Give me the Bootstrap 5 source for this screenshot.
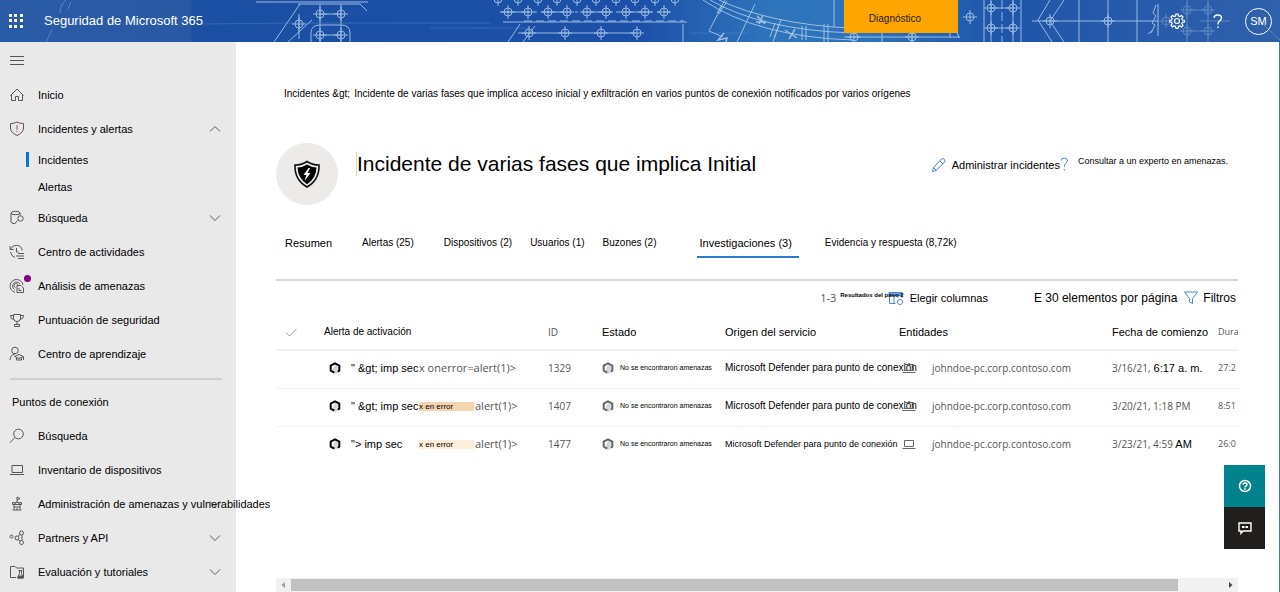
<!DOCTYPE html>
<html lang="es">
<head>
<meta charset="utf-8">
<meta name="viewport" content="width=device-width, initial-scale=1">
<title>Seguridad de Microsoft 365</title>
<link rel="stylesheet" href="https://cdn.jsdelivr.net/npm/bootstrap@5.3.0/dist/css/bootstrap.min.css">
<style>
  body { font-family: "Liberation Sans", sans-serif; font-size: 11px; line-height: 16px; color: #000; background: #fff; }
  a { color: inherit; text-decoration: none; }
  svg { flex: none; display: block; fill: none; stroke: currentColor; }
  .segoe { font-family: "Open Sans", sans-serif; color: #555; }
  .fs-7 { font-size: 7px; }
  .fs-9 { font-size: 9px; }
  .fs-10 { font-size: 10px; }
  .fs-11 { font-size: 11px; }
  .fs-12 { font-size: 12px; }
  .plain-btn { border: 0; background: none; padding: 0; color: #000; white-space: nowrap; }

  .topbar { height: 42px; background: #1d4fa6; color: #fff; overflow: hidden; }
  .topbar .blueprint { position: absolute; inset: 0; width: 100%; height: 100%; }
  .suite-name { font-size: 13px; }
  .launcher { width: 44px; padding-left: 9px; }
  .diagnostic { width: 114px; height: 33px; background: #ffa500; color: #222; border: 0; font-size: 10px; right: 322px; top: 0; padding: 4px 12px 0 0; }
  .persona { width: 27px; height: 27px; border: 1px solid #fff; font-size: 11px; margin: 0 8px 0 7px; }
  .tool { width: 41px; height: 42px; color: #fff; }

  .sidebar { width: 236px; background: #e9e9e9; flex: none; }
  .menu-btn { height: 36px; padding-left: 10px; }
  .side-link { height: 34px; padding: 0 14px 0 9px; white-space: nowrap; }
  .side-link .label { width: 171px; margin-left: 13px; }
  .side-link svg { color: #5c5558; }
  .sub-list { padding-bottom: 1px; }
  .sub-link { height: 27px; padding-left: 26px; }
  .sub-link::before { content: ""; width: 3px; height: 15px; margin-right: 9px; }
  .sub-link.active::before { background: #0078d4; }
  .side-rule { height: 2px; background: #cfcfcf; margin: 7px 14px 5px 10px; }
  .new-dot { width: 7px; height: 7px; background: #800080; left: 15px; top: -3px; }

  .page { padding: 44px 41px 0 40px; border-right: 1px solid #3f7cb5; min-width: 0; }
  .crumbs { padding-left: 8px; }
  .heading { margin-top: 41px; }
  .entity { width: 62px; height: 62px; background: #edebe9; }
  .page-title { font-size: 21px; line-height: 24px; border-left: 1px solid #f3d6a8; margin: 9px 0 0 18px; }
  .actions { margin: 10px 10px 0 0; }
  .manage { gap: 6px; }
  .consult { gap: 9px; }

  .tabs { margin-top: 28px; height: 48px; border-bottom: 2px solid #d6d6d6; padding-left: 9px; }
  .tabs a { height: 25px; padding-top: 2px; margin-right: 18px; white-space: nowrap; }
  .tabs a.roomy { margin-right: 30px; }
  .tabs a.apart { margin-right: 40px; }
  .tabs a.active { border-bottom: 2px solid #2b7cd3; padding-left: 3px; padding-right: 7px; margin-right: 26px; }

  .tools { height: 34px; padding-right: 2px; }
  .results { font-size: 6px; font-weight: 700; line-height: 8px; margin: 0 -16px 6px 4px; }
  .choose { gap: 6px; }
  .paging { margin: 0 6px 0 46px; }
  .blue { color: #4a86d0; }

  .grid { table-layout: fixed; white-space: nowrap; }
  .grid th { font-weight: 400; height: 35px; padding: 0; border-bottom: 2px solid #f0f0f0; vertical-align: middle; }
  .grid td { height: 38px; padding: 0 0 2px; border-bottom: 1px solid #f1f1f1; vertical-align: middle; }
  .grid tbody tr:last-child td { border: 0; }
  .c-check { width: 48px; } .c-alert { width: 224px; } .c-id { width: 54px; } .c-state { width: 123px; }
  .c-origin { width: 174px; } .c-entity { width: 213px; } .c-start { width: 106px; }
  .alert-icon { margin: 0 10px 0 5px; }
  .alert-name { width: 68px; }
  .state-icon { color: #666; margin-right: 6px; }
  .pc-icon { color: #666; margin: 0 16px 0 3px; }
  .hl { width: 55px; height: 9px; line-height: 9px; font-size: 8px; margin-right: 1px; }
  .hl-strong { background: #f5d5b0; }
  .hl-soft { background: #fdeedb; }

  .feedback { right: 15px; top: 465px; width: 41px; }
  .feedback button { width: 41px; height: 42px; border: 0; color: #fff; padding: 0; }
  .teal { background: #00838c; }
  .ink { background: #201f1e; }
  .scroller { height: 14px; background: #f1f1f1; }
  .scroller .thumb { height: 12px; background: #c1c1c1; margin-right: 45px; }
</style>
</head>
<body class="d-flex flex-column min-vh-100">

<svg class="d-none" aria-hidden="true">
  <symbol id="hexa" viewBox="0 0 12 12"><path fill="#d3d6da" stroke="none" d="m6 3 2.800 1.500v3L7.500 8.500l.8 2.700L6 12 3.500 8z"/><path stroke-width="2" d="M5.300 10.700 1.700 8.700V3.600L6 1.300l4.300 2.300v5L8.600 9.700"/></symbol>
  <symbol id="laptop" viewBox="0 0 14 14"><path d="M2.500 3.500h9v6h-9zM.5 11.500h13"/></symbol>
  <symbol id="down" viewBox="0 0 12 12"><path d="m1 3.500 5 5 5-5"/></symbol>
</svg>

<header class="topbar position-relative d-flex align-items-center">
  <svg class="blueprint" viewBox="0 0 1280 42" preserveAspectRatio="xMidYMid slice" aria-hidden="true">
    <defs>
      <linearGradient id="sky" x1="0" x2="1" y1="0" y2="0">
        <stop offset="0" stop-color="#2a5ba6"/><stop offset=".149" stop-color="#2a59a4"/><stop offset=".15" stop-color="#1b4fa3"/><stop offset=".5" stop-color="#1c50a8"/>
        <stop offset=".6" stop-color="#2e74bb"/><stop offset=".68" stop-color="#2d72ba"/><stop offset=".78" stop-color="#1f55aa"/><stop offset="1" stop-color="#2f60ab"/>
      </linearGradient>
      <g id="node"><circle r="4"/><path d="M-7 0H7M0-7V7"/></g>
    </defs>
    <path fill="url(#sky)" stroke="none" d="M0 0h1280v42H0z"/>
    <g stroke="#b9d4ee" stroke-width="1" opacity=".8">
      <path d="M256 2h112M300 4l-26 38M312 20l-24 22M298 4h62l7 7M311 42v-9q0-8 9-8h21q9 0 9 8v9M299 14v25" />
      <path d="M320 4v38M341 4v38M320 14h21M320 35h21"/>
      <use href="#node" x="320" y="14"/><use href="#node" x="341" y="14"/><use href="#node" x="320" y="35"/><use href="#node" x="341" y="35"/><use href="#node" x="299" y="24"/>
      <path d="M500 12h170" stroke-dasharray="30 4 3 4"/>
      <path d="M503 22h184M520 24l-12 18M535 26l-12 16M683 24v18M518 33h118"/>
      <path d="M524 21h160" stroke-dasharray="8 4"/>
      <use href="#node" x="508" y="12"/><use href="#node" x="528" y="12"/><use href="#node" x="548" y="12"/><use href="#node" x="567" y="12"/><use href="#node" x="587" y="12"/><use href="#node" x="606" y="12"/><use href="#node" x="626" y="12"/><use href="#node" x="645" y="12"/><use href="#node" x="664" y="12"/>
      <use href="#node" x="498" y="-1"/><use href="#node" x="518" y="-1"/><use href="#node" x="538" y="-1"/><use href="#node" x="557" y="-1"/><use href="#node" x="577" y="-1"/><use href="#node" x="596" y="-1"/><use href="#node" x="616" y="-1"/><use href="#node" x="635" y="-1"/><use href="#node" x="655" y="-1"/><use href="#node" x="675" y="-1"/>
      <use href="#node" x="529" y="33"/><use href="#node" x="565" y="33"/><use href="#node" x="601" y="33"/><use href="#node" x="637" y="33"/>
      <path d="M703 0q55 37 150 40M710 0q52 30 143 33M719 0q52 24 130 28M722 6l-13 25 14 6M755 4l-18 38M781 20l-8 22M725 0l-8 13M727 1l-8 13M775 23l-5 14M779 24l-5 14M802 26v14M806 26v14M824 24v18M828 24v18M834 0v27"/>
      <path stroke-width="1.500" d="m757 16 8 8m-2-9-4 9m7-2-10 0M785 30l12 8m-2-9-6 10M724 33l-6 7 9-2-1 4"/>
      <path d="M844 37h116M882 33v9M912 30v12M950 18v20M953 20l6 18"/>
      <use href="#node" x="854" y="37"/><use href="#node" x="912" y="37"/><use href="#node" x="970" y="17"/>
      <path d="M984 0v42M1021 0v42M991 0v42M1013 0v42M991 8h22M991 28h22"/><path d="M1002 0v42" stroke-dasharray="9 3"/>
      <use href="#node" x="991" y="8"/><use href="#node" x="1013" y="8"/><use href="#node" x="991" y="28"/><use href="#node" x="1013" y="28"/>
      <path d="M1032 21h126M1050 0l-12 20 14 22M1064 0l-14 21 14 21M1079 0v42M1108 0v42M1137 0v42"/>
      <use href="#node" x="1050" y="21"/><use href="#node" x="1108" y="21"/><path d="M1158 4v32M1151 33l4-8-3-2 4-7-3-3 3-8M1148 34l5-4"/>
    </g>
    <g stroke="#b9d4ee" opacity=".35"><path d="M60 13q0-8 6-13M68 9l3-7M46 42l6-12M1187 0v42M1208 0v42M1187 10h21M1187 31h21M1230 21h-30M1280 40l-24-22"/><use href="#node" x="1187" y="10"/><use href="#node" x="1208" y="10"/><use href="#node" x="1187" y="31"/><use href="#node" x="1208" y="31"/><use href="#node" x="1166" y="21"/></g>
    <path stroke="#6fa3dc" opacity=".3" d="M200 24l100-1h190M430 28h100M690 33h60"/>
  </svg>
  <button class="plain-btn launcher position-relative text-white" aria-label="Iniciador de aplicaciones">
    <svg width="14" height="14" viewBox="0 0 14 14"><path fill="#fff" stroke="none" d="M0 0h3v3H0zM5 0h3v3H5zM11 0h3v3h-3zM0 5h3v3H0zM5 5h3v3H5zM11 5h3v3h-3zM0 11h3v3H0zM5 11h3v3H5zM11 11h3v3h-3z"/></svg>
  </button>
  <span class="suite-name position-relative">Seguridad de Microsoft 365</span>
  <button class="diagnostic position-absolute">Diagnóstico</button>
  <div class="position-relative d-flex align-items-center ms-auto">
    <button class="plain-btn tool d-flex align-items-center justify-content-center" aria-label="Configuración"><svg width="16" height="16" viewBox="0 0 16 16"><circle cx="8" cy="8" r="2.500" stroke-width="1.200"/><path stroke-width="1.200" d="m7 1-.5 2-1.300.6L3.400 2.500 2 4l1.200 1.700-.6 1.300-2 .4v1.600l2 .4.6 1.300L2 12.500 3.500 14l1.700-1.200 1.300.6.5 2h2l.5-2 1.300-.6 1.700 1.200 1.500-1.500-1.200-1.800.6-1.300 2-.4V7.400l-2-.4-.6-1.300L14 4l-1.500-1.500-1.700 1.100L9.500 3 9 1z"/></svg></button>
    <button class="plain-btn tool d-flex align-items-center justify-content-center" aria-label="Ayuda"><svg width="10" height="15" viewBox="0 0 10 15"><path stroke-width="1.400" d="M1.200 4q0-3 3.600-3t3.700 2.900q0 1.600-1.900 3Q5 8 5 10.500M5 12.500v1.600"/></svg></button>
    <button class="plain-btn persona rounded-circle text-white">SM</button>
  </div>
</header>

<div class="d-flex flex-grow-1">
  <nav class="sidebar">
    <button class="plain-btn menu-btn d-flex align-items-center w-100" aria-label="Menú"><svg width="14" height="10" viewBox="0 0 14 10"><path stroke="#555" d="M0 1.500h14M0 5.500h14M0 9.500h14"/></svg></button>
    <a href="#" class="side-link d-flex align-items-center"><svg width="16" height="16" viewBox="0 0 16 16"><path d="M2.500 7.500v6h4v-4h3v4h4v-6M1.500 8.500 8 2l6.500 6.500"/></svg><span class="label">Inicio</span></a>
    <a href="#" class="side-link d-flex align-items-center"><svg width="16" height="16" viewBox="0 0 16 16"><path d="M8 1Q5.500 2.500 1.500 2.500V7q0 4.500 6.500 7.500Q14.500 11.500 14.500 7V2.500Q10.500 2.500 8 1z"/><path stroke="#a04a80" d="M8 4v5M8 10v1"/></svg><span class="label">Incidentes y alertas</span><svg width="12" height="12" viewBox="0 0 12 12"><path d="m1 8.500 5-5 5 5"/></svg></a>
    <div class="sub-list">
      <a href="#" class="sub-link active d-flex align-items-center">Incidentes</a>
      <a href="#" class="sub-link d-flex align-items-center">Alertas</a>
    </div>
    <a href="#" class="side-link d-flex align-items-center"><svg width="16" height="16" viewBox="0 0 16 16"><ellipse cx="6.500" cy="3" rx="4.500" ry="1.700"/><path d="M2 3v9q0 1.500 4 1.700M11 3v2.500M8.500 10.500l-3 3.500"/><circle cx="11.500" cy="8.500" r="2.700"/></svg><span class="label">Búsqueda</span><svg width="12" height="12"><use href="#down"/></svg></a>
    <a href="#" class="side-link d-flex align-items-center"><svg width="16" height="16" viewBox="0 0 16 16"><path d="M1 2v3.500h3.500M1.500 5q2-3.700 6-3.700 5 0 5.700 5.200M1.500 8q.5 4 4.500 5.500M7.500 4v4h2M9 9.500h6M7 12h8M9 14.500h6"/></svg><span class="label">Centro de actividades</span></a>
    <a href="#" class="side-link d-flex align-items-center"><span class="position-relative"><svg width="16" height="16" viewBox="0 0 16 16"><path d="M6 14.300A6.500 6.500 0 1 1 14 7M5.500 11.500A4 4 0 1 1 11 6M6.500 9.500A2 2 0 1 1 9 7M8 7.500h4l2.500 2.500v4.500H8zM10 10v2.500h2.500"/></svg><span class="new-dot position-absolute rounded-circle"></span></span><span class="label">Análisis de amenazas</span></a>
    <a href="#" class="side-link d-flex align-items-center"><svg width="16" height="16" viewBox="0 0 16 16"><path d="M4.500 2.500h7v4q0 3-3.500 3t-3.500-3zM4.500 3.500h-3q0 4 3.500 4M11.500 3.500h3q0 4-3.500 4M8 9.500V12M5.500 14.500v-2h5v2z"/></svg><span class="label">Puntuación de seguridad</span></a>
    <a href="#" class="side-link d-flex align-items-center"><svg width="16" height="16" viewBox="0 0 16 16"><circle cx="6" cy="4.500" r="3.300"/><path d="M1 14q0-5 5-6M5.500 10.500l4.500-2 4.500 2-4.500 2zM7.500 12v2h5v-2M14.500 11v3"/></svg><span class="label">Centro de aprendizaje</span></a>
    <div class="side-rule"></div>
    <div class="side-link d-flex align-items-center ps-2"><span class="ps-1">Puntos de conexión</span></div>
    <a href="#" class="side-link d-flex align-items-center"><svg width="16" height="16" viewBox="0 0 16 16"><circle cx="9.500" cy="6" r="4.800"/><path d="M6 9.500 1 14.500"/></svg><span class="label">Búsqueda</span></a>
    <a href="#" class="side-link d-flex align-items-center"><svg width="16" height="16" viewBox="0 0 16 16"><path d="M3 3.500h10.500v7H3zM1 12.500h14"/></svg><span class="label">Inventario de dispositivos</span></a>
    <a href="#" class="side-link d-flex align-items-center"><svg width="16" height="16" viewBox="0 0 16 16"><path d="M8 6V1l3 1.500L8 4M3.500 6.500v2h9v-2h-2v1h-1v-1h-3v1h-1v-1zM5 8.500v5M11 8.500v5M3.500 14h9M5 11h6M8 12v2"/></svg><span class="label position-relative z-1">Administración de amenazas y vulnerabilidades</span><svg width="12" height="12"><use href="#down"/></svg></a>
    <a href="#" class="side-link d-flex align-items-center"><svg width="16" height="16" viewBox="0 0 16 16"><circle cx="2.500" cy="6.500" r="1.500"/><circle cx="8" cy="8" r="2"/><circle cx="12.500" cy="3" r="2"/><circle cx="12.500" cy="12.500" r="2"/><path d="M9 6.200 11.200 4.500M9.300 9.500l1.800 1.700M13 5v5.500"/></svg><span class="label">Partners y API</span><svg width="12" height="12"><use href="#down"/></svg></a>
    <a href="#" class="side-link d-flex align-items-center"><svg width="16" height="16" viewBox="0 0 16 16"><path d="M7 13.500H1.500v-11H6l1.500 1.500h7V13M9.500 6.500h4M10.500 6.500v3L8.500 14h6l-2-4.500v-3"/><path fill="currentColor" d="M9.500 12h4l.7 2H8.800z"/></svg><span class="label">Evaluación y tutoriales</span><svg width="12" height="12"><use href="#down"/></svg></a>
  </nav>

  <main class="page d-flex flex-column flex-grow-1">
    <nav class="crumbs d-flex fs-10 gap-1" aria-label="Ruta"><a href="#">Incidentes &amp;gt;</a><span>Incidente de varias fases que implica acceso inicial y exfiltración en varios puntos de conexión notificados por varios orígenes</span></nav>

    <div class="heading d-flex align-items-start">
      <div class="entity rounded-circle d-flex align-items-center justify-content-center"><svg width="28" height="28" viewBox="0 0 28 28"><path stroke="#111" stroke-width="1.600" d="M14 1.500q5 3.500 12 3.500 .5 15-12 22Q1.500 20 2 5q7 0 12-3.500z"/><path fill="#000" stroke="none" d="M14 4.500q4 2.700 9.500 3Q23 18.500 14 24.300 5 18.500 4.500 7.500q5.500-.3 9.500-3z"/><path fill="#fff" stroke="none" d="m15.500 8-5 7h3l-2 6 6-8h-3l2.500-5z"/></svg></div>
      <h1 class="page-title fw-normal">Incidente de varias fases que implica Initial</h1>
      <div class="actions d-flex align-items-start ms-auto">
        <button class="plain-btn manage d-flex align-items-center mt-1"><svg class="blue" width="15" height="16" viewBox="0 0 15 16"><path d="m1.500 14.500 1-4 8-8.500q1.500-1 2.700.2t.3 2.800l-8.300 8.500zM9 4l3 3M2.500 10.500l3 3"/></svg>Administrar incidentes</button>
        <button class="plain-btn consult d-flex fs-9"><svg class="blue mt-1" width="9" height="14" viewBox="0 0 9 14"><path d="M1 3.500Q1 1 4.200 1T7.500 3.500q0 1.500-1.700 2.800T4.300 10M4.300 12v1.500"/></svg>Consultar a un experto en amenazas.</button>
      </div>
    </div>

    <nav class="tabs d-flex fs-10" aria-label="Secciones">
      <a href="#" class="fs-11 roomy">Resumen</a><a href="#" class="roomy">Alertas (25)</a><a href="#">Dispositivos (2)</a><a href="#">Usuarios (1)</a><a href="#" class="apart">Buzones (2)</a><a href="#" class="active fs-11">Investigaciones (3)</a><a href="#">Evidencia y respuesta (8,72k)</a>
    </nav>

    <div class="tools d-flex align-items-center justify-content-end">
      <span class="segoe">1-3</span><span class="results position-relative z-1">Resultados del paso 2</span>
      <button class="plain-btn choose d-flex align-items-center"><svg class="blue" width="16" height="16" viewBox="0 0 16 16"><path fill="#6fa3dc" d="M1 2.500h13v3H1z"/><path d="M1.500 5v8.500h6M6 5v8.500M10 5v3M14 5v3"/><circle cx="12" cy="12" r="2.500"/></svg>Elegir columnas</button>
      <button class="plain-btn paging fs-12">E 30 elementos por página</button>
      <button class="plain-btn d-flex align-items-center gap-1 fs-12"><svg class="blue" width="16" height="16" viewBox="0 0 16 16"><path d="M1.500 2h13L9.500 8.500v5l-3-1.500V8.500z"/></svg>Filtros</button>
    </div>

    <div class="overflow-hidden">
      <table class="grid w-100">
        <colgroup><col class="c-check"><col class="c-alert"><col class="c-id"><col class="c-state"><col class="c-origin"><col class="c-entity"><col class="c-start"><col></colgroup>
        <thead><tr>
          <th><svg class="ms-2" width="14" height="14" viewBox="0 0 14 14" aria-label="Seleccionar"><path stroke="#999" d="m2 7.500 3.500 3.500L12.500 4"/></svg></th>
          <th class="fs-10">Alerta de activación</th><th class="segoe fs-10">ID</th><th>Estado</th><th>Origen del servicio</th><th>Entidades</th><th>Fecha de comienzo</th><th class="segoe fs-9">Dura</th>
        </tr></thead>
        <tbody>
          <tr>
            <td></td>
            <td><div class="d-flex align-items-center"><svg class="alert-icon" width="12" height="12"><use href="#hexa"/></svg><span class="alert-name">" &amp;gt; imp sec</span><span class="segoe">x onerror=alert(1)&gt;</span></div></td>
            <td class="segoe fs-10">1329</td>
            <td><div class="d-flex align-items-center"><svg class="state-icon" width="12" height="12"><use href="#hexa"/></svg><span class="fs-7">No se encontraron amenazas</span></div></td>
            <td class="fs-10">Microsoft Defender para punto de conexión</td>
            <td><div class="segoe fs-10 d-flex align-items-center"><svg class="pc-icon" width="14" height="14"><use href="#laptop"/></svg>johndoe-pc.corp.contoso.com</div></td>
            <td><span class="segoe fs-10">3/16/21,</span> 6:17 a. m.</td>
            <td class="segoe fs-9">27:2</td>
          </tr>
          <tr>
            <td></td>
            <td><div class="d-flex align-items-center"><svg class="alert-icon" width="12" height="12"><use href="#hexa"/></svg><span class="alert-name">" &amp;gt; imp sec</span><span class="hl hl-strong">x en error</span><span class="segoe">alert(1)&gt;</span></div></td>
            <td class="segoe fs-10">1407</td>
            <td><div class="d-flex align-items-center"><svg class="state-icon" width="12" height="12"><use href="#hexa"/></svg><span class="fs-7">No se encontraron amenazas</span></div></td>
            <td class="fs-10">Microsoft Defender para punto de conexión</td>
            <td><div class="segoe fs-10 d-flex align-items-center"><svg class="pc-icon" width="14" height="14"><use href="#laptop"/></svg>johndoe-pc.corp.contoso.com</div></td>
            <td class="segoe fs-10">3/20/21, 1:18 PM</td>
            <td class="segoe fs-9">8:51</td>
          </tr>
          <tr>
            <td></td>
            <td><div class="d-flex align-items-center"><svg class="alert-icon" width="12" height="12"><use href="#hexa"/></svg><span class="alert-name">"&gt; imp sec</span><span class="hl hl-soft">x en error</span><span class="segoe">alert(1)&gt;</span></div></td>
            <td class="segoe fs-10">1477</td>
            <td><div class="d-flex align-items-center"><svg class="state-icon" width="12" height="12"><use href="#hexa"/></svg><span class="fs-7">No se encontraron amenazas</span></div></td>
            <td class="fs-9">Microsoft Defender para punto de conexión</td>
            <td><div class="segoe fs-10 d-flex align-items-center"><svg class="pc-icon" width="14" height="14"><use href="#laptop"/></svg>johndoe-pc.corp.contoso.com</div></td>
            <td><span class="segoe fs-10">3/23/21, 4:59</span> AM</td>
            <td class="segoe fs-9">26:0</td>
          </tr>
        </tbody>
      </table>
    </div>

    <div class="scroller d-flex align-items-center mt-auto" aria-hidden="true">
      <svg width="15" height="14" viewBox="0 0 15 14"><path fill="#999" stroke="none" d="M9 4v6L5.500 7z"/></svg>
      <span class="thumb flex-grow-1"></span>
      <svg width="15" height="14" viewBox="0 0 15 14"><path fill="#444" stroke="none" d="M6 4v6l3.500-3z"/></svg>
    </div>
  </main>
</div>

<div class="feedback position-fixed">
  <button class="teal d-flex align-items-center justify-content-center" aria-label="Ayuda"><svg width="14" height="14" viewBox="0 0 14 14"><circle cx="7" cy="7" r="5.500" stroke-width="1.500"/><path stroke-width="1.500" d="M5 5.800Q5 4 7 4t2 1.600Q9 7 7 7.800V8.500M7 9.300v1.400"/></svg></button>
  <button class="ink d-flex align-items-center justify-content-center" aria-label="Comentarios"><svg width="14" height="14" viewBox="0 0 14 14"><path stroke-width="1.400" d="M1 2h12v8H5l-2 2.300V10H1z"/><path fill="#fff" stroke="none" d="M4 5h2.500v2H4zM7.500 5H10v2H7.500z"/></svg></button>
</div>
<script src="https://cdn.jsdelivr.net/npm/bootstrap@5.3.0/dist/js/bootstrap.bundle.min.js"></script>
</body>
</html>
